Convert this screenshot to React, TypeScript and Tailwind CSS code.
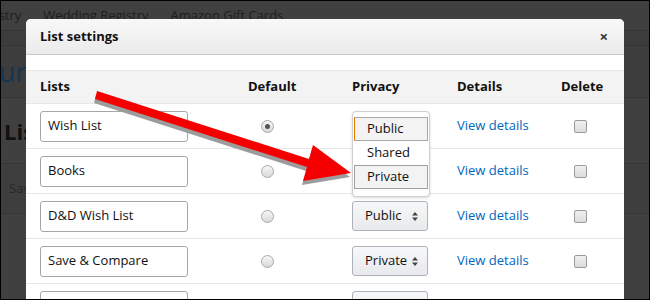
import React from "react";

type ListRow = {
  name: string;
  isDefault: boolean;
  privacy: string;
  menuOpen?: boolean;
};

const rows: ListRow[] = [
  { name: "Wish List", isDefault: true, privacy: "Public", menuOpen: true },
  { name: "Books", isDefault: false, privacy: "Private", menuOpen: true },
  { name: "D&D Wish List", isDefault: false, privacy: "Public" },
  { name: "Save & Compare", isDefault: false, privacy: "Private" },
  { name: "", isDefault: false, privacy: "" },
];

function Radio({ checked }: { checked: boolean }) {
  return (
    <span className="ml-[13px] flex h-[13px] w-[13px] items-center justify-center rounded-full border border-[#a9a9a9] bg-gradient-to-b from-[#f6f6f6] to-[#d9d9d9]">
      {checked ? <span className="h-[5px] w-[5px] rounded-full bg-[#555]" /> : null}
    </span>
  );
}

function Checkbox() {
  return (
    <span className="ml-[13px] block h-[13px] w-[13px] rounded-[2px] border border-[#9a9a9a] bg-gradient-to-b from-[#f0f0f0] to-[#dcdcdc]" />
  );
}

function SelectButton({ value, hidden }: { value: string; hidden?: boolean }) {
  return (
    <div
      className={
        hidden
          ? "invisible h-[30px] w-[76px]"
          : "flex h-[30px] w-[76px] items-center justify-between rounded-[3px] border border-[#adb1b8] bg-gradient-to-b from-[#f7f8fa] to-[#e7e9ec] pl-[12px] pr-[9px] text-[13px] text-[#111]"
      }
    >
      {hidden ? null : (
        <>
          <span>{value}</span>
          <svg width="6" height="9" viewBox="0 0 6 9">
            <path d="M3 0 L6 3.5 H0 Z" fill="#444" />
            <path d="M3 9 L6 5.5 H0 Z" fill="#444" />
          </svg>
        </>
      )}
    </div>
  );
}

function PrivacyMenu() {
  return (
    <div className="absolute left-[326px] top-[92px] z-10 flex w-[78px] flex-col rounded-[4px] border border-[#cfcfcf] bg-white px-[1px] pb-[7px] pt-[5px] text-[13px] text-[#111] shadow-[0_1px_3px_rgba(0,0,0,0.15)]">
      <div className="flex h-[24px] items-center border border-[#a9a9a9] border-l-[#e77600] bg-[#f3f3f3] pl-[12px]">
        Public
      </div>
      <div className="flex h-[24px] items-center pl-[13px]">Shared</div>
      <div className="flex h-[24px] items-center border border-[#a0a0a0] bg-[#f3f3f3] pl-[12px]">
        Private
      </div>
    </div>
  );
}

function Arrow() {
  const points = "96,90 308,158 312,144 350,172 302,180 306,166 94,98";
  return (
    <svg
      className="pointer-events-none absolute left-0 top-0 z-20"
      width="650"
      height="300"
      viewBox="0 0 650 300"
    >
      <polygon points={points} fill="#9c9c9c" transform="translate(-1 4)" />
      <polygon points={points} fill="#f50000" />
    </svg>
  );
}

function BackgroundPage() {
  return (
    <div className="flex flex-col whitespace-nowrap text-[13px] text-[#1e1e1e]">
      <div className="flex h-[30px] items-center gap-[22px] border-b border-[#353535]">
        <span className="-ml-[28px]">Registry</span>
        <span>Wedding Registry</span>
        <span>Amazon Gift Cards</span>
      </div>
      <div className="h-[15px] border-b border-[#353535] bg-[#3c3c3c]" />
      <div className="flex h-[52px] items-center border-b border-[#363636] bg-[#3d3d3d]">
        <span className="-ml-[2px] text-[27px] leading-none text-[#183550]">ur</span>
      </div>
      <div className="flex h-[66px] items-center border-b border-[#363636]">
        <span className="ml-[3px] text-[22px] font-bold leading-none text-[#111]">List</span>
      </div>
      <div className="flex h-[50px] items-center border-b border-[#363636] bg-[#3e3e3e]">
        <span className="ml-[8px] text-[#282828]">Save</span>
      </div>
    </div>
  );
}

export default function App() {
  return (
    <div
      className="relative h-[300px] w-[650px] overflow-hidden border border-black bg-[#404040]"
      style={{ fontFamily: '"Open Sans", "Noto Sans", sans-serif' }}
    >
      <BackgroundPage />

      <div className="absolute left-[25px] top-[18px] w-[598px] overflow-hidden rounded-t-[5px] bg-white">
        <div className="flex h-[36px] items-center justify-between border-b border-[#c9c9c9] bg-gradient-to-b from-[#f8f8f8] to-[#ebebeb] pl-[14px] pr-[16px]">
          <span className="text-[13px] font-bold text-[#111]">List settings</span>
          <span className="text-[15px] font-bold leading-none text-[#333]">×</span>
        </div>

        <div className="mt-[15px] flex h-[34px] items-center border-y border-[#e7e7e7] bg-[#f3f3f3] pl-[14px] text-[13px] font-bold text-[#111]">
          <span className="w-[208px]">Lists</span>
          <span className="w-[104px]">Default</span>
          <span className="w-[105px]">Privacy</span>
          <span className="w-[104px]">Details</span>
          <span>Delete</span>
        </div>

        {rows.map((row, index) => (
          <div
            key={index}
            className="flex h-[45px] items-center border-b border-[#e7e7e7] pl-[14px] text-[13px]"
          >
            <div className="w-[208px]">
              <div className="flex h-[31px] w-[148px] items-center rounded-[3px] border border-[#a6a6a6] px-[7px] text-[#111]">
                {row.name}
              </div>
            </div>
            <div className="w-[104px]">
              <Radio checked={row.isDefault} />
            </div>
            <div className="w-[105px]">
              <SelectButton value={row.privacy} hidden={row.menuOpen} />
            </div>
            <div className="w-[104px] text-[#0066c0]">{row.name ? "View details" : ""}</div>
            <div>
              <Checkbox />
            </div>
          </div>
        ))}

        <PrivacyMenu />
      </div>

      <Arrow />
    </div>
  );
}
